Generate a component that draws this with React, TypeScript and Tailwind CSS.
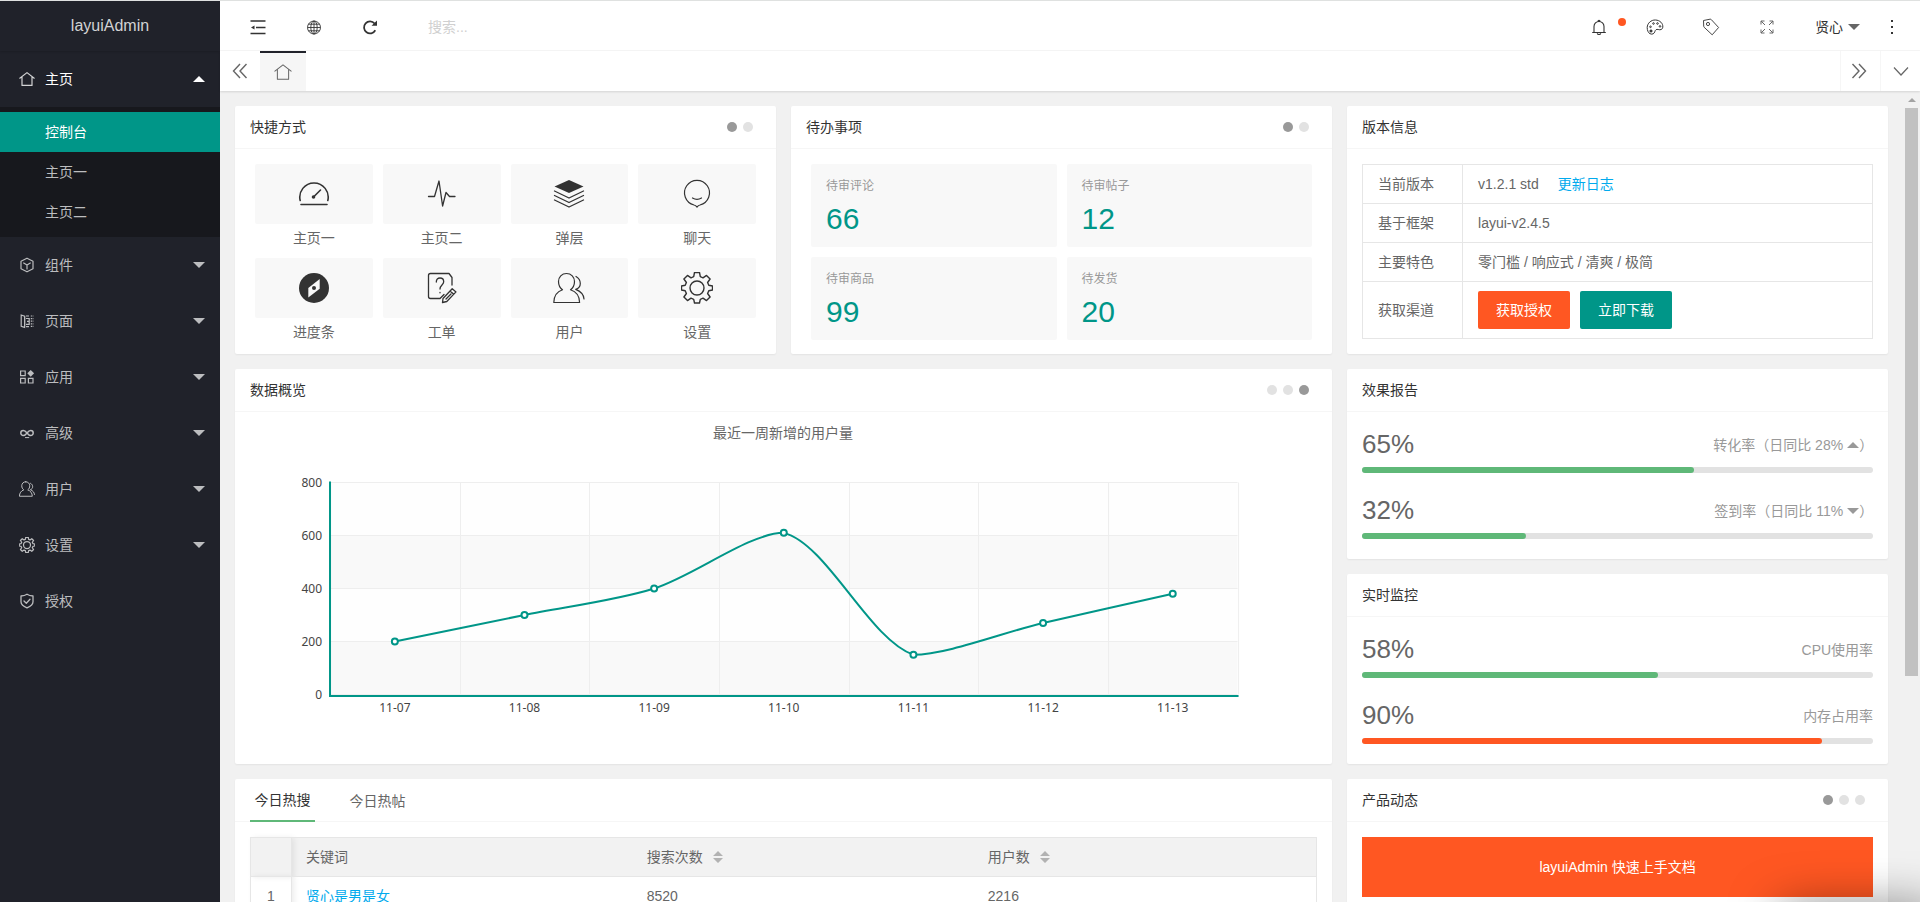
import type { ReactNode } from 'react';

type IconProps = { className?: string };

const HomeIcon = ({ className = 'size-4' }: IconProps) => (
  <svg viewBox="0 0 16 16" className={className} fill="none" stroke="currentColor" strokeLinejoin="round" strokeLinecap="round" aria-hidden="true">
    <path d="M0.8 7.2 8 1.6l7.2 5.6M3 5.8v8.6h10V5.8" />
  </svg>
);

const CubeIcon = () => (
  <svg viewBox="0 0 16 16" className="size-4" fill="none" stroke="currentColor" strokeWidth="1.2" strokeLinejoin="round" aria-hidden="true">
    <path d="M8 1.2 14 4.3v7.4L8 14.8 2 11.7V4.3zM4.3 5.8 8 8l3.7-2.2M8 8v4.4" />
  </svg>
);

const PagesIcon = () => (
  <svg viewBox="0 0 16 16" className="size-4" fill="none" stroke="currentColor" strokeWidth="1.2" aria-hidden="true">
    <path d="M2.2 2v11.4l3.4 1V3.2zM7 3h3M7 13.6h3" />
    <path d="M7 5.5h3.2v5.8H7M8 8.4h2M5.6 13.5V3.2" />
    <path d="M11.8 3h2.6M11.8 5.6h2.6M11.8 8.2h2.6M11.8 10.8h2.6M11.8 13.4h2.6" strokeDasharray="1.4 .6" />
  </svg>
);

const AppsIcon = () => (
  <svg viewBox="0 0 16 16" className="size-4" fill="none" stroke="currentColor" strokeWidth="1.2" aria-hidden="true">
    <path d="M1.6 2h4.6v4.6H1.6zM1.6 9.4h4.6V14H1.6zM9.4 9.4H14V14H9.4z" />
    <path d="m11.7 1 3.4 3.3-3.4 3.4-3.4-3.4z" fill="currentColor" stroke="none" />
  </svg>
);

const InfinityIcon = () => (
  <svg viewBox="0 0 16 16" className="size-4" fill="none" stroke="currentColor" strokeWidth="1.5" strokeLinecap="round" aria-hidden="true">
    <path d="M8 8C6.8 6.4 5.7 5.5 4.3 5.5a2.5 2.5 0 0 0 0 5c1.400 0 2.500-.9 3.700-2.500 1.200-1.600 2.300-2.500 3.700-2.500a2.500 2.500 0 0 1 0 5C10.300 10.500 9.200 9.600 8 8z" />
    <path d="M6.4 12.6h3.4" strokeWidth="1" />
  </svg>
);

const UserIcon = ({ className = 'size-4' }: IconProps) => (
  <svg viewBox="0 0 32 32" className={className} fill="none" stroke="currentColor" strokeLinejoin="round" strokeLinecap="round" aria-hidden="true">
    <path d="M13.5 1.5c-4.700 0-8 3.500-8 8 0 3.500 1.500 6.500 4 8.300C4.300 19.500 1 24 .8 30.500h25.800c-.2-6.500-3.700-11-9.100-12.700 2.500-1.800 4-4.800 4-8.300 0-4.500-3.300-8-8-8z" />
    <path d="M23 4.500c3 1.800 4.300 4 4.300 7 0 2.700-1.500 4.900-4.600 5.900 5 2 8 5.300 8.300 9.600" />
  </svg>
);

const GearIcon = ({ className = 'size-4' }: IconProps) => (
  <svg viewBox="0 1 32 32" className={className} fill="none" stroke="currentColor" strokeLinejoin="round" aria-hidden="true">
    <path d="M13.5 1.5h5l.8 4.2 2.700 1.100 3.500-2.400 3.600 3.600-2.500 3.500 1.200 2.700 3.700.8v4l-3.700.8-1.200 2.700 2.500 3.500-3.600 3.600-3.500-2.400-2.700 1.100-.8 3.700h-5l-.8-3.700-2.700-1.100-3.500 2.400L2.900 26l2.500-3.500-1.200-2.700-3.700-.8v-4l3.700-.8 1.200-2.700L2.900 8l3.600-3.600L10 6.800l2.700-1.100z" />
    <circle cx="16" cy="17" r="7" />
  </svg>
);

const ShieldIcon = () => (
  <svg viewBox="0 0 16 16" className="size-4" fill="none" stroke="currentColor" strokeWidth="1.3" strokeLinejoin="round" strokeLinecap="round" aria-hidden="true">
    <path d="M8 1.2c1.8 1.2 3.6 1.7 6 1.8v5.8c0 2.700-2.400 4.700-6 6.100-3.600-1.400-6-3.400-6-6.100V3c2.400-.1 4.200-.6 6-1.800zM5 8l2.300 2.200L11 6.200" />
  </svg>
);

const Caret = ({ up = false, className = '' }: { up?: boolean; className?: string }) => (
  <svg viewBox="0 0 12 6" className={`h-1.5 w-3 ${className}`} fill="currentColor" aria-hidden="true">
    <path d={up ? 'M0 6 6 0l6 6z' : 'M0 0h12L6 6z'} />
  </svg>
);

const GaugeIcon = () => (
  <svg viewBox="0 0 32 32" className="size-8" fill="none" stroke="currentColor" strokeWidth="1.6" strokeLinecap="round" aria-hidden="true">
    <path d="M2.2 22.500A14.200 14.200 0 1 1 29.800 22.500M3 26.500h26" />
    <path d="m16 18.500 6.500-6.500" />
    <circle cx="15.5" cy="19" r="1.8" fill="currentColor" stroke="none" />
  </svg>
);

const PulseIcon = () => (
  <svg viewBox="0 0 32 32" className="size-8" fill="none" stroke="currentColor" strokeWidth="1.3" strokeLinejoin="round" strokeLinecap="round" aria-hidden="true">
    <path d="M2.5 18.500h6L13 3l3.600 25 3.400-13.500 3.500 4h5.500" />
  </svg>
);

const LayersIcon = () => (
  <svg viewBox="0 0 32 32" className="size-8" fill="none" stroke="currentColor" strokeWidth="1.3" strokeLinejoin="round" strokeLinecap="round" aria-hidden="true">
    <path d="M16 2 30.500 8.500 16 15 1.500 8.500z" fill="currentColor" stroke="none" />
    <path d="m1.500 13 14.500 7 14.500-7M1.500 17.500l14.500 7 14.500-7M1.500 22 16 29l14.500-7" />
  </svg>
);

const ChatIcon = () => (
  <svg viewBox="0 0 32 32" className="size-8" fill="none" stroke="currentColor" strokeWidth="1.2" strokeLinejoin="round" strokeLinecap="round" aria-hidden="true">
    <path d="M13 27a12.500 12.500 0 1 1 6 0c-1.300.2-2 .8-3 2-1-1.200-1.700-1.800-3-2zM11.500 20c2.500 1.500 6.500 1.500 9 0" />
  </svg>
);

const CompassIcon = () => (
  <svg viewBox="0 0 32 32" className="size-8" aria-hidden="true">
    <circle cx="16" cy="16" r="15" fill="currentColor" />
    <path d="M21.700 7v9.700L10.300 25.500v-9.600z" fill="#f8f8f8" />
    <circle cx="16" cy="16" r="2" fill="currentColor" />
  </svg>
);

const TicketIcon = () => (
  <svg viewBox="0 0 32 32" className="size-8" fill="none" stroke="currentColor" strokeWidth="1.3" strokeLinejoin="round" strokeLinecap="round" aria-hidden="true">
    <path d="M26 13V5.500L23 1.500H4.500C3 1.500 2.500 2 2.500 3.500v21c0 1.500.7 2 2 2H14l4-4" />
    <path d="M10.300 10c0-2.500 1.500-4 3.700-4s3.700 1.500 3.700 3.700c0 3.300-3.700 3.300-3.700 7.300M14 20.500v.3" />
    <path d="m17 26.500 9.200-9.700 3.800 3.100-9.200 9.600-4.300 1zM24 19l3.800 3.200M20 27l5-5" />
  </svg>
);

const nav = [
  { label: '组件', icon: <CubeIcon /> },
  { label: '页面', icon: <PagesIcon /> },
  { label: '应用', icon: <AppsIcon /> },
  { label: '高级', icon: <InfinityIcon /> },
  { label: '用户', icon: <UserIcon className="size-4 stroke-2" /> },
  { label: '设置', icon: <GearIcon className="size-4 stroke-[2.5]" /> },
  { label: '授权', icon: <ShieldIcon />, leaf: true },
];

const shortcuts = [
  { label: '主页一', icon: <GaugeIcon /> },
  { label: '主页二', icon: <PulseIcon /> },
  { label: '弹层', icon: <LayersIcon /> },
  { label: '聊天', icon: <ChatIcon /> },
  { label: '进度条', icon: <CompassIcon /> },
  { label: '工单', icon: <TicketIcon /> },
  { label: '用户', icon: <UserIcon className="size-8 stroke-[1.2]" /> },
  { label: '设置', icon: <GearIcon className="size-8 stroke-[1.4]" /> },
];

const todos = [
  { label: '待审评论', value: 66 },
  { label: '待审帖子', value: 12 },
  { label: '待审商品', value: 99 },
  { label: '待发货', value: 20 },
];

const Sidebar = () => (
  <aside className="w-[220px] shrink-0 overflow-hidden bg-[#20222a] text-[#bcbdbf]">
    <div className="h-[50px] text-center text-base leading-[50px] text-[#d2d3d4] shadow-[0_1px_2px_rgba(0,0,0,0.15)]">layuiAdmin</div>
    <nav>
      <a href="#home" className="flex h-14 items-center pr-[15px] pl-[19px] text-white">
        <HomeIcon className="size-4 stroke-[1.2] text-[#d2d3d4]" />
        <span className="ml-2.5 grow">主页</span>
        <Caret up />
      </a>
      <div className="bg-[#17181d] py-[5px]">
        <a href="#console" className="block bg-[#009688] pl-[45px] leading-10 text-white">控制台</a>
        <a href="#home1" className="block pl-[45px] leading-10">主页一</a>
        <a href="#home2" className="block pl-[45px] leading-10">主页二</a>
      </div>
      {nav.map((item) => (
        <a key={item.label} href="#nav" className="flex h-14 items-center pr-[15px] pl-[19px]">
          {item.icon}
          <span className="ml-2.5 grow">{item.label}</span>
          {!item.leaf && <Caret />}
        </a>
      ))}
    </nav>
  </aside>
);

const headerButton = 'flex h-full w-14 items-center justify-center';

const Header = () => (
  <header className="flex h-[50px] shrink-0 items-center border-b border-[#f6f6f6] bg-white pt-0.5 pl-2.5 text-[#333]">
    <button aria-label="侧边伸缩" className={headerButton}>
      <svg viewBox="0 0 16 16" className="size-4" fill="none" stroke="currentColor" strokeWidth="1.4" aria-hidden="true">
        <path d="M.5 2h15M6 8.500h9.500M.5 14.500h15" />
        <path d="M4.500 6.500v4L1 8.500z" fill="currentColor" stroke="none" />
      </svg>
    </button>
    <button aria-label="前台" className={headerButton}>
      <svg viewBox="0 0 16 16" className="size-4" fill="none" stroke="currentColor" strokeWidth=".9" aria-hidden="true">
        <circle cx="8" cy="8.500" r="6.500" />
        <ellipse cx="8" cy="8.500" rx="3.200" ry="6.500" />
        <path d="M8 2v13M1.500 8.500h13M2.500 5.200h11M2.500 11.800h11" />
      </svg>
    </button>
    <button aria-label="刷新" className={headerButton}>
      <svg viewBox="0 0 16 16" className="size-4" fill="none" stroke="currentColor" strokeWidth="1.8" aria-hidden="true">
        <path d="M13.300 11.300A6 6 0 1 1 12.600 4.500" />
        <path d="M15 1.500v5.300H9.500z" fill="currentColor" stroke="none" />
      </svg>
    </button>
    <input type="text" aria-label="搜索" placeholder="搜索..." className="ml-[30px] w-40 text-sm outline-none placeholder:text-[#d0d0d0]" />
    <div className="ml-auto flex h-full items-center pr-5">
      <button aria-label="消息" className={`${headerButton} relative`}>
        <svg viewBox="0 0 16 16" className="size-4" fill="none" stroke="currentColor" strokeWidth="1.1" strokeLinejoin="round" aria-hidden="true">
          <path d="M1.200 13.500h13.600M3 13.500V7.500a5 5 0 0 1 10 0v6M7 2.200a1 1 0 0 1 2 0M6.300 14.200a1.700 1.300 0 0 0 3.400 0" />
        </svg>
        <span className="absolute top-[15px] right-px size-2 rounded-full bg-[#ff5722]" />
      </button>
      <button aria-label="主题" className={headerButton}>
        <svg viewBox="0 0 18 18" className="size-[18px]" fill="none" stroke="currentColor" strokeWidth="1" aria-hidden="true">
          <path d="M9.500 2C5 1.800 1.300 5.300 1.200 9.500c0 2.800 1 5.300 2.800 6.200 2.500 1.200 4.300-.2 4.800-2 .5-1.900 1.700-2.700 3.400-2.200 2.200.7 4.300.1 4.600-2.300C17.200 5.300 13.800 2.200 9.500 2z" />
          <circle cx="5" cy="13" r="1.100" fill="currentColor" />
          <circle cx="4.500" cy="8.800" r=".8" />
          <circle cx="7.500" cy="5.500" r=".8" />
          <circle cx="11.500" cy="5.500" r=".8" />
          <circle cx="14" cy="8.400" r=".8" />
        </svg>
      </button>
      <button aria-label="便签" className={headerButton}>
        <svg viewBox="0 0 18 18" className="size-[18px]" fill="none" stroke="currentColor" strokeWidth=".9" strokeLinejoin="round" aria-hidden="true">
          <path d="M1.500 2.500 8 1.200c.6-.1 1 .1 1.400.5l7.200 7.800-6.400 7.300L2.200 9.300c-.3-.4-.5-.8-.5-1.300z" />
          <circle cx="6" cy="6" r="1.600" />
        </svg>
      </button>
      <button aria-label="全屏" className={headerButton}>
        <svg viewBox="0 0 16 16" className="size-4" fill="none" stroke="#666" strokeWidth="1" aria-hidden="true">
          <path d="M6 6 2 2m0 3.500V2h3.500M10 6l4-4m-3.500 0H14v3.500M6 10l-4 4m0-3.500V14h3.500M10 10l4 4m-3.500 0H14v-3.500" />
        </svg>
      </button>
      <button className="ml-5 flex items-center gap-[5px] text-sm">
        贤心
        <Caret className="text-[#666]" />
      </button>
      <button aria-label="更多" className="ml-6 flex w-4 flex-col items-center gap-1">
        <span className="size-0.5 bg-[#333]" />
        <span className="size-0.5 bg-[#333]" />
        <span className="size-0.5 bg-[#333]" />
      </button>
    </div>
  </header>
);

const TabBar = () => (
  <div className="relative z-10 flex h-10 shrink-0 bg-white text-[#666] shadow-[0_1px_2px_rgba(0,0,0,0.12)]">
    <button aria-label="向左" className="flex w-10 items-center justify-center">
      <svg viewBox="0 0 16 16" className="size-4" fill="none" stroke="currentColor" strokeWidth="1.4" aria-hidden="true">
        <path d="M8 1 1.500 8 8 15M14.500 1 8 8l6.500 7" />
      </svg>
    </button>
    <a href="#home" aria-label="主页" className="flex w-[46px] items-center justify-center border-t-2 border-[#20222a] bg-[#f6f6f6]">
      <HomeIcon className="size-[18px] stroke-[0.9]" />
    </a>
    <button aria-label="向右" className="ml-auto flex w-9 items-center justify-center border-l border-[#f6f6f6]">
      <svg viewBox="0 0 16 16" className="size-4" fill="none" stroke="currentColor" strokeWidth="1.4" aria-hidden="true">
        <path d="m1.500 1 6.500 7-6.500 7M8 1l6.500 7L8 15" />
      </svg>
    </button>
    <button aria-label="标签操作" className="ml-1 flex w-10 items-center justify-center border-l border-[#f6f6f6]">
      <svg viewBox="0 0 16 16" className="size-4" fill="none" stroke="currentColor" strokeWidth="1.2" aria-hidden="true">
        <path d="m1 4.500 7 7.500 7-7.500" />
      </svg>
    </button>
  </div>
);

const Dots = ({ count, active }: { count: number; active: number }) => (
  <div className="flex gap-1.5 pr-2">
    {Array.from({ length: count }, (_, i) => (
      <button key={i} aria-label={`第${i + 1}页`} className={`size-2.5 rounded-full ${i === active ? 'bg-[#999]' : 'bg-[#e2e2e2]'}`} />
    ))}
  </div>
);

const Card = ({ title, dots, children }: { title: string; dots?: ReactNode; children: ReactNode }) => (
  <section className="rounded-xs bg-white shadow-[0_1px_2px_rgba(0,0,0,0.06)]">
    <div className="flex h-[43px] items-center justify-between border-b border-[#f6f6f6] px-[15px]">
      <h2 className="text-[#333]">{title}</h2>
      {dots}
    </div>
    {children}
  </section>
);

const Progress = ({ value, color, children }: { value: number; color: string; children: ReactNode }) => (
  <div>
    <div className="mb-[5px] flex h-[35px] items-center justify-between">
      <span className="text-[26px]">{value}%</span>
      <span className="flex items-center text-[#999]">{children}</span>
    </div>
    <div className="h-1.5 rounded-full bg-[#e2e2e2]">
      <div className={`h-full rounded-full ${color}`} style={{ width: `${value}%` }} />
    </div>
  </div>
);

const days = ['11-07', '11-08', '11-09', '11-10', '11-11', '11-12', '11-13'];
const users = [200, 300, 400, 610, 150, 270, 380];
const plot = { left: 80, top: 55.5, width: 907.5, height: 212 };
const step = plot.width / days.length;
const bottom = plot.top + plot.height;
const smooth = 0.3;
const points = users.map((v, i) => ({
  x: plot.left + step * (i + 0.5),
  y: bottom - (v / 800) * plot.height,
}));

// smooth line, control points kept inside the range of the data
const curve = () => {
  const ys = points.map((p) => p.y);
  const clamp = (y: number) => Math.min(Math.max(y, Math.min(...ys)), Math.max(...ys));
  const controls = points.map((p, i) => {
    const prev = points[i - 1];
    const next = points[i + 1];
    if (!prev || !next) return { before: p, after: p };
    const a = Math.hypot(p.x - prev.x, p.y - prev.y);
    const b = Math.hypot(next.x - p.x, next.y - p.y);
    const ratio = b / (a + b);
    const vx = (next.x - prev.x) * smooth;
    const vy = (next.y - prev.y) * smooth;
    return {
      before: { x: p.x - vx * (1 - ratio), y: clamp(p.y - vy * (1 - ratio)) },
      after: { x: p.x + vx * ratio, y: clamp(p.y + vy * ratio) },
    };
  });
  return points
    .map((p, i) => {
      if (i === 0) return `M${p.x} ${p.y}`;
      const c1 = controls[i - 1].after;
      const c2 = controls[i].before;
      return `C${c1.x} ${c1.y} ${c2.x} ${c2.y} ${p.x} ${p.y}`;
    })
    .join('');
};

const UserChart = () => (
  <svg viewBox="0 0 1067 322" className="w-full overflow-visible" role="img" aria-label="最近一周新增的用户量">
    <text x="533" y="11" textAnchor="middle" fill="#666" className="text-sm">最近一周新增的用户量</text>
    {[0, 1, 2, 3].map((i) => (
      <rect key={i} x={plot.left} y={plot.top + i * 53} width={plot.width} height="53" fill={i % 2 ? '#f9f9f9' : '#fefefe'} />
    ))}
    {[0, 1, 2, 3, 4].map((i) => (
      <g key={i}>
        <path d={`M${plot.left} ${plot.top + i * 53}h${plot.width}`} stroke="#eee" />
        <text x="72" y={plot.top + i * 53 + 4} textAnchor="end" fill="#444" className="font-['Noto_Sans',sans-serif] text-xs">{800 - i * 200}</text>
      </g>
    ))}
    {days.map((day, i) => (
      <g key={day}>
        <path d={`M${Math.round(plot.left + step * (i + 1)) + 0.5} ${plot.top}v${plot.height}`} stroke="#eee" />
        <text x={points[i].x} y="285" textAnchor="middle" fill="#444" className="font-['Noto_Sans',sans-serif] text-xs">{day}</text>
      </g>
    ))}
    <path d={`M${plot.left} ${plot.top - 1}V269H${plot.left + plot.width + 1}`} fill="none" stroke="#009688" strokeWidth="2" />
    <path d={curve()} fill="none" stroke="#009688" strokeWidth="2" />
    {points.map((p) => (
      <circle key={p.x} cx={p.x} cy={p.y} r="3" fill="#fff" stroke="#009688" strokeWidth="2" />
    ))}
  </svg>
);

const SortIcon = () => (
  <svg viewBox="0 0 10 12" className="ml-2.5 h-3 w-2.5" fill="#b2b2b2" aria-hidden="true">
    <path d="M0 5 5 0l5 5zM0 7h10l-5 5z" />
  </svg>
);

const HotSearch = () => (
  <section className="rounded-xs bg-white shadow-[0_1px_2px_rgba(0,0,0,0.06)]">
    <div className="flex h-[43px] gap-[30px] border-b border-[#f6f6f6] px-[15px]" role="tablist">
      <button role="tab" aria-selected="true" className="h-[43px] w-[65px] border-b-2 border-[#5fb878] text-[#333]">今日热搜</button>
      <button role="tab" aria-selected="false" className="h-[43px] w-[65px]">今日热帖</button>
    </div>
    <div className="p-[15px]">
      <table className="w-full table-fixed border-collapse border border-[#e6e6e6] text-left">
        <colgroup>
          <col className="w-[41px]" />
          <col className="w-[32%]" />
          <col className="w-[32%]" />
          <col />
        </colgroup>
        <thead>
          <tr className="h-[39px] border-b border-[#e6e6e6] bg-[#f2f2f2]">
            <th className="border-r border-[#e6e6e6] shadow-[2px_0_6px_rgba(0,0,0,0.08)]" aria-label="序号" />
            <th className="px-3.5 font-normal">关键词</th>
            <th className="px-3.5 font-normal">
              <span className="flex items-center">搜索次数<SortIcon /></span>
            </th>
            <th className="px-3.5 font-normal">
              <span className="flex items-center">用户数<SortIcon /></span>
            </th>
          </tr>
        </thead>
        <tbody>
          <tr className="h-[39px] border-b border-[#e6e6e6]">
            <td className="border-r border-[#e6e6e6] text-center shadow-[2px_0_6px_rgba(0,0,0,0.08)]">1</td>
            <td className="px-3.5"><a href="#hot" className="text-[#01aaed]">贤心是男是女</a></td>
            <td className="px-3.5">8520</td>
            <td className="px-3.5">2216</td>
          </tr>
        </tbody>
      </table>
    </div>
  </section>
);

const versionLabel = 'w-[100px] border border-[#e6e6e6] px-[15px] py-[9px] text-left font-normal';
const versionValue = 'border border-[#e6e6e6] px-[15px] py-[9px]';

const VersionTable = () => (
  <div className="p-[15px]">
    <table className="w-full border-collapse">
      <tbody>
        <tr>
          <th className={versionLabel}>当前版本</th>
          <td className={versionValue}>
            v1.2.1 std
            <a href="#log" className="ml-[19px] text-[#01aaed]">更新日志</a>
          </td>
        </tr>
        <tr>
          <th className={versionLabel}>基于框架</th>
          <td className={versionValue}>layui-v2.4.5</td>
        </tr>
        <tr>
          <th className={versionLabel}>主要特色</th>
          <td className={versionValue}>零门槛 / 响应式 / 清爽 / 极简</td>
        </tr>
        <tr>
          <th className={versionLabel}>获取渠道</th>
          <td className={versionValue}>
            <div className="flex gap-2.5">
              <a href="#auth" className="rounded-xs bg-[#ff5722] px-[18px] leading-[38px] text-white">获取授权</a>
              <a href="#download" className="rounded-xs bg-[#009688] px-[18px] leading-[38px] text-white">立即下载</a>
            </div>
          </td>
        </tr>
      </tbody>
    </table>
  </div>
);

const Dashboard = () => (
  <main className="min-w-0 grow overflow-hidden p-[15px]">
    <div className="grid grid-cols-3 gap-[15px]">
      <Card title="快捷方式" dots={<Dots count={2} active={0} />}>
        <div className="grid grid-cols-4 gap-2.5 px-5 pt-[15px]">
          {shortcuts.map((item) => (
            <a key={item.label} href="#go" className="block text-center">
              <span className="flex h-[60px] items-center justify-center rounded-xs bg-[#f8f8f8] text-[#333]">{item.icon}</span>
              <span className="-mb-0.5 block pt-0.5 leading-6">{item.label}</span>
            </a>
          ))}
        </div>
      </Card>
      <Card title="待办事项" dots={<Dots count={2} active={0} />}>
        <div className="grid grid-cols-2 gap-2.5 px-5 pt-[15px]">
          {todos.map((item) => (
            <a key={item.label} href="#todo" className="block h-[83px] rounded-xs bg-[#f8f8f8] px-[15px] pt-2.5">
              <h3 className="text-xs leading-6 text-[#999]">{item.label}</h3>
              <p className="text-[30px] leading-[42px] text-[#009688]">{item.value}</p>
            </a>
          ))}
        </div>
      </Card>
      <Card title="版本信息">
        <VersionTable />
      </Card>

      <div className="col-span-2 flex flex-col gap-[15px]">
        <Card title="数据概览" dots={<Dots count={3} active={2} />}>
          <div className="p-[15px]">
            <UserChart />
          </div>
        </Card>
        <HotSearch />
      </div>

      <div className="flex flex-col gap-[15px]">
        <Card title="效果报告">
          <div className="flex flex-col gap-5 px-[15px] pt-[15px] pb-5">
            <Progress value={65} color="bg-[#5fb878]">
              转化率（日同比 28% <Caret up className="ml-1" />）
            </Progress>
            <Progress value={32} color="bg-[#5fb878]">
              签到率（日同比 11% <Caret className="ml-1" />）
            </Progress>
          </div>
        </Card>
        <Card title="实时监控">
          <div className="flex flex-col gap-5 px-[15px] pt-[15px] pb-5">
            <Progress value={58} color="bg-[#5fb878]">CPU使用率</Progress>
            <Progress value={90} color="bg-[#ff5722]">内存占用率</Progress>
          </div>
        </Card>
        <Card title="产品动态" dots={<Dots count={3} active={0} />}>
          <div className="p-[15px]">
            <a href="#docs" className="block bg-[#ff5722] text-center leading-[60px] text-white">layuiAdmin 快速上手文档</a>
          </div>
        </Card>
      </div>
    </div>
  </main>
);

const Scrollbar = () => (
  <div className="flex w-[17px] shrink-0 flex-col items-center bg-[#f1f1f1]" aria-hidden="true">
    <div className="flex h-[17px] shrink-0 items-center">
      <svg viewBox="0 0 8 4" className="h-1 w-2" fill="#a3a3a3">
        <path d="M0 4 4 0l4 4z" />
      </svg>
    </div>
    <div className="h-[70%] w-[13px] bg-[#c1c1c1]" />
  </div>
);

const App = () => {
  return (
    <div className="relative flex h-screen overflow-hidden border-t border-[#dfe1e0] bg-[#f1f1f1] font-['Liberation_Sans','Noto_Sans_CJK_SC',sans-serif] text-sm text-[#666]">
      <Sidebar />
      <div className="flex min-w-0 grow flex-col">
        <Header />
        <TabBar />
        <div className="flex min-h-0 grow">
          <Dashboard />
          <Scrollbar />
        </div>
      </div>
      <div className="pointer-events-none absolute -right-5 -bottom-10 h-8 w-40 rounded-xl shadow-[0_0_50px_rgba(0,0,0,0.6)]" />
    </div>
  );
};

export default App;
